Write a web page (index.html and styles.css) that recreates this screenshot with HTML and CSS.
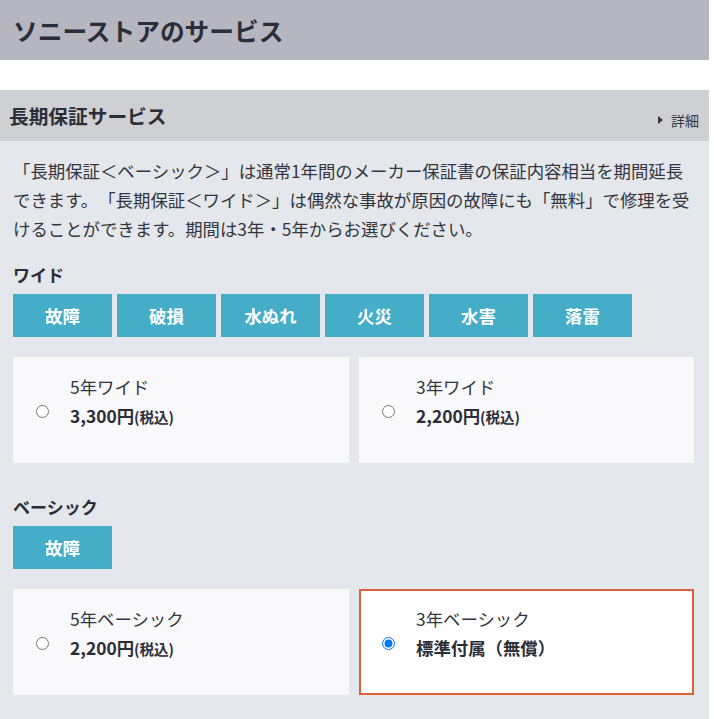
FILE: index.html
```html
<!DOCTYPE html>
<html lang="ja">
<head>
<meta charset="utf-8">
<title>ソニーストアのサービス</title>
<link rel="stylesheet" href="styles.css">
</head>
<body>
<div class="page">
  <header class="page-header"><h1>ソニーストアのサービス</h1></header>
  <div class="spacer"></div>
  <section class="service">
    <div class="section-head">
      <h2>長期保証サービス</h2>
      <a class="detail" href="#"><span class="tri"></span>詳細</a>
    </div>
    <div class="section-body">
      <p class="desc">「長期保証＜ベーシック＞」は通常1年間のメーカー保証書の保証内容相当を期間延長できます。「長期保証＜ワイド＞」は偶然な事故が原因の故障にも「無料」で修理を受けることができます。期間は3年・5年からお選びください。</p>

      <h3 class="plan-label">ワイド</h3>
      <div class="tags">
        <span class="tag">故障</span>
        <span class="tag">破損</span>
        <span class="tag">水ぬれ</span>
        <span class="tag">火災</span>
        <span class="tag">水害</span>
        <span class="tag">落雷</span>
      </div>
      <div class="options">
        <label class="option">
          <input type="radio" name="plan">
          <span class="opt-text"><span class="opt-name">5年ワイド</span><span class="opt-price">3,300円<small>(税込)</small></span></span>
        </label>
        <label class="option">
          <input type="radio" name="plan">
          <span class="opt-text"><span class="opt-name">3年ワイド</span><span class="opt-price">2,200円<small>(税込)</small></span></span>
        </label>
      </div>

      <h3 class="plan-label second">ベーシック</h3>
      <div class="tags">
        <span class="tag">故障</span>
      </div>
      <div class="options">
        <label class="option">
          <input type="radio" name="plan">
          <span class="opt-text"><span class="opt-name">5年ベーシック</span><span class="opt-price">2,200円<small>(税込)</small></span></span>
        </label>
        <label class="option selected">
          <input type="radio" name="plan" checked>
          <span class="opt-text"><span class="opt-name">3年ベーシック</span><span class="opt-price">標準付属（無償）</span></span>
        </label>
      </div>
    </div>
  </section>
</div>
</body>
</html>
```

FILE: styles.css
```css
html, body {
  margin: 0;
  padding: 0;
  background: #ffffff;
}
body {
  font-family: "Noto Sans CJK JP", "Noto Sans", sans-serif;
  color: #333640;
  text-spacing-trim: space-all;
}
.page {
  width: 709px;
  min-height: 719px;
  background: #e4e7eb;
}
.page-header {
  height: 60px;
  background: #b6b6c0;
  display: flex;
  align-items: center;
  padding-left: 13px;
}
.page-header h1 {
  margin: 0;
  font-size: 24.7px;
  font-weight: 700;
  color: #2b2e38;
}
.spacer {
  height: 30px;
  background: #ffffff;
}
.section-head {
  height: 51px;
  background: #cfd0d4;
  display: flex;
  justify-content: space-between;
  align-items: center;
  padding: 0 10px 0 9px;
}
.section-head h2 {
  margin: 0 0 1px;
  font-size: 19.7px;
  font-weight: 700;
  color: #2b2e38;
}
.detail {
  font-size: 14px;
  color: #333640;
  text-decoration: none;
  margin-top: 8px;
  display: flex;
  align-items: center;
}
.tri {
  width: 0;
  height: 0;
  border-left: 5px solid #333640;
  border-top: 4px solid transparent;
  border-bottom: 4px solid transparent;
  margin-right: 8px;
}
.section-body {
  padding: 15px 15px 24px 13px;
}
.desc {
  margin: 0;
  font-size: 17.4px;
  line-height: 29px;
  color: #333640;
  text-spacing-trim: space-all;
}
.plan-label {
  margin: 20px 0 7px;
  font-size: 17px;
  line-height: 24px;
  font-weight: 700;
  color: #2b2e38;
}
.plan-label.second {
  margin-top: 32px;
}
.tags {
  display: flex;
  gap: 5px;
}
.tag {
  width: 99px;
  height: 43px;
  background: #45adc8;
  color: #ffffff;
  font-size: 17.4px;
  font-weight: 700;
  display: flex;
  align-items: center;
  justify-content: center;
}
.options {
  display: grid;
  grid-template-columns: 336px 335px;
  gap: 10px;
  margin-top: 20px;
}
.option {
  height: 106px;
  box-sizing: border-box;
  background: #f9f9fb;
  display: flex;
  align-items: flex-start;
  padding: 15px 0 0 23px;
  cursor: pointer;
}
.option input {
  width: 13px;
  height: 13px;
  margin: 33px 21px 0 0;
  flex: none;
}
.option.selected {
  background: #ffffff;
  border: 2px solid #df6139;
  padding: 13px 0 0 21px;
}
.opt-text {
  display: flex;
  flex-direction: column;
}
.opt-name {
  font-size: 17.4px;
  line-height: 29px;
  color: #333640;
}
.opt-price {
  font-size: 17.4px;
  line-height: 29px;
  font-weight: 700;
  color: #2b2e38;
}
.opt-price small {
  font-size: 14.5px;
  font-weight: 700;
}
```
